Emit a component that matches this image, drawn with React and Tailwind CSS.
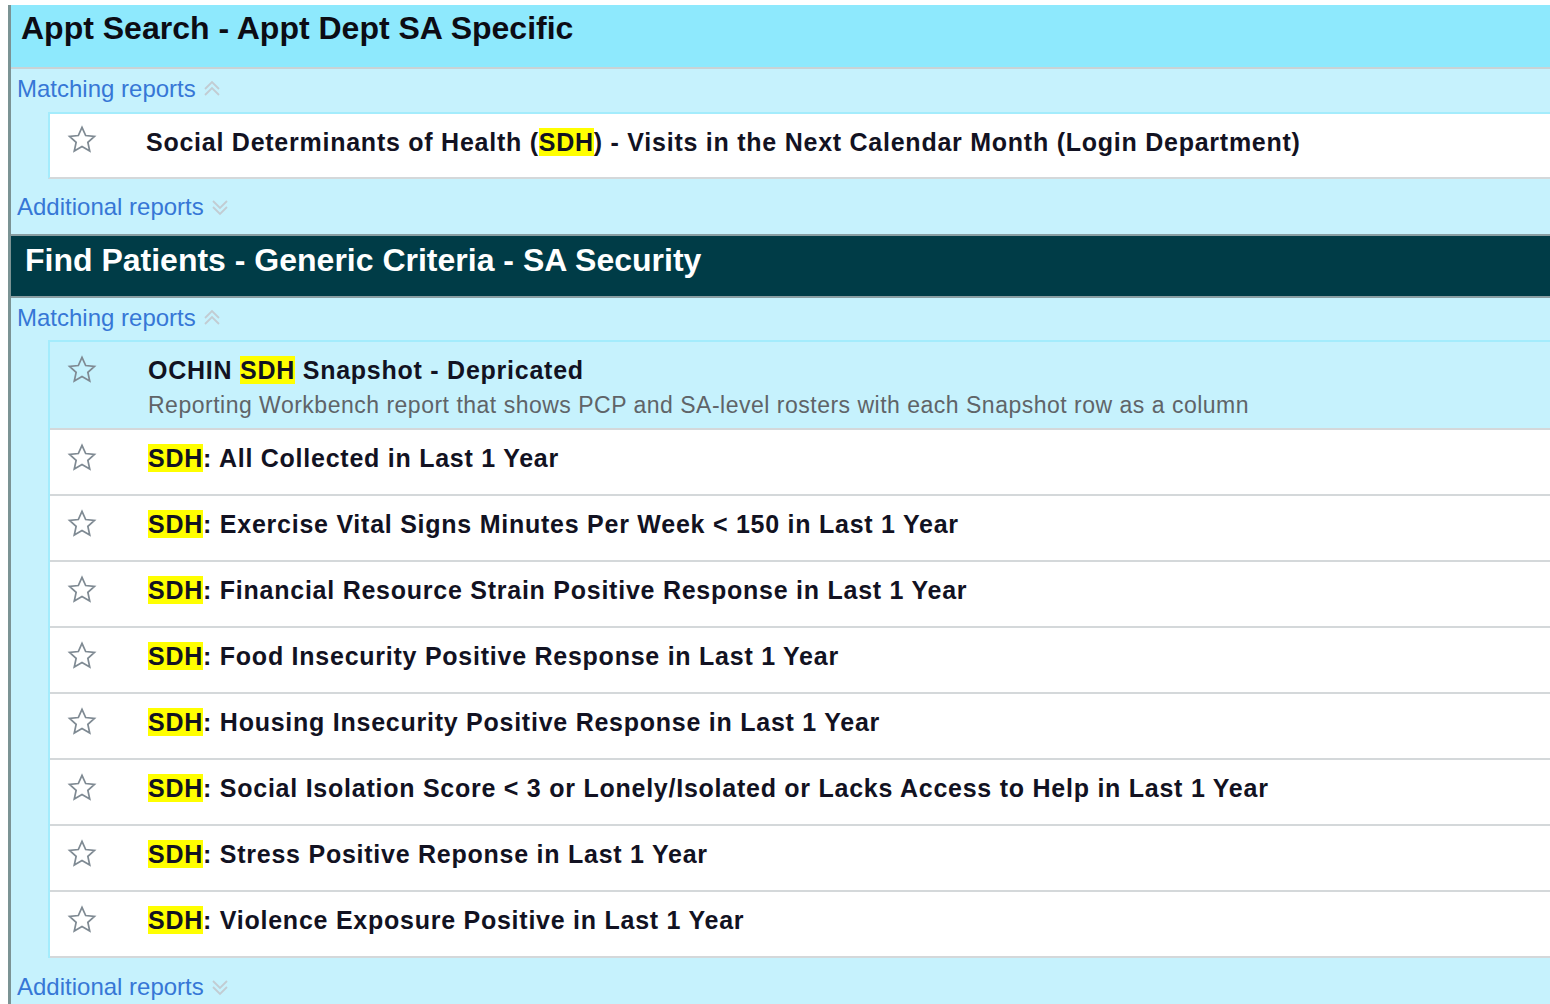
import { Fragment } from 'react';

const font = { fontFamily: '"Liberation Sans", Arial, sans-serif' };

function Star() {
    return (
        <svg width="32" height="32" viewBox="0 0 24 24" className="shrink-0">
            <path
                d="M12 2.6l2.75 6.05 6.6.7-4.95 4.45 1.4 6.5L12 16.95l-5.8 3.35 1.4-6.5L2.65 9.35l6.6-.7z"
                fill="none"
                stroke="#7f8a93"
                strokeWidth="1.3"
                strokeLinejoin="miter"
            />
        </svg>
    );
}

function Chevrons({ up }) {
    return (
        <svg width="20" height="22" viewBox="0 0 20 22" className="ml-[6px]">
            {up ? (
                <g fill="none" stroke="#c2ccd2" strokeWidth="1.8">
                    <path d="M3 11l7-7 7 7" />
                    <path d="M3 17l7-7 7 7" />
                </g>
            ) : (
                <g fill="none" stroke="#c2ccd2" strokeWidth="1.8">
                    <path d="M3 5l7 7 7-7" />
                    <path d="M3 11l7 7 7-7" />
                </g>
            )}
        </svg>
    );
}

function Hl({ children }) {
    return <span className="bg-[#ffff00]">{children}</span>;
}

function SectionLink({ label, up, className }) {
    return (
        <div className={`flex items-center pl-[6px] text-[24px] text-[#3677d6] ${className}`}>
            <span>{label}</span>
            <Chevrons up={up} />
        </div>
    );
}

function ReportRow({ children, sub, active, first }) {
    return (
        <div
            className={`flex items-start border-b-2 border-[#d4d8da] ${active ? 'bg-[#c6f2fd]' : 'bg-white'} ${first ? 'h-[88px]' : 'h-[66px]'}`}
        >
            <div className="w-[98px] pl-[16px] pt-[12px]">
                <Star />
            </div>
            <div className="pt-[13px]">
                <div className="text-[25px] tracking-[0.75px] font-bold text-[#121222] leading-[30px]">{children}</div>
                {sub && (
                    <div className="text-[23px] tracking-[0.5px] text-[#5f6468] leading-[30px] mt-[5px]">{sub}</div>
                )}
            </div>
        </div>
    );
}

const sdhReports = [
    'All Collected in Last 1 Year',
    'Exercise Vital Signs Minutes Per Week < 150 in Last 1 Year',
    'Financial Resource Strain Positive Response in Last 1 Year',
    'Food Insecurity Positive Response in Last 1 Year',
    'Housing Insecurity Positive Response in Last 1 Year',
    'Social Isolation Score < 3 or Lonely/Isolated or Lacks Access to Help in Last 1 Year',
    'Stress Positive Reponse in Last 1 Year',
    'Violence Exposure Positive in Last 1 Year',
];

export default function App() {
    return (
        <div style={font} className="w-[1550px] h-[1004px] overflow-hidden bg-white pl-2 pt-[5px]">
            <div className="h-full border-l-[3px] border-[#7b9394] bg-[#c6f2fd]">
                {/* first group */}
                <div className="h-[64px] bg-[#8ee9fd] border-b-2 border-[#c9d3d6] pl-[10px] pt-[3px] leading-[40px] text-[32px] font-bold text-[#0c0c14]">
                    Appt Search - Appt Dept SA Specific
                </div>
                <SectionLink label="Matching reports" up className="h-[43px] pb-[4px]" />
                <div className="ml-[37px] h-[67px] bg-white border-t-2 border-l-2 border-[#a4ecfc] border-b-2 border-b-[#d4d8da] flex items-start">
                    <div className="w-[96px] pl-[16px] pt-[10px]">
                        <Star />
                    </div>
                    <div className="pt-[13px] text-[25px] tracking-[0.75px] font-bold text-[#121222] leading-[30px]">
                        Social Determinants of Health (<Hl>SDH</Hl>) - Visits in the Next Calendar Month (Login Department)
                    </div>
                </div>
                <SectionLink label="Additional reports" className="h-[55px]" />

                {/* second group */}
                <div className="h-[64px] bg-[#003c47] border-y-2 border-[#8a9ea2] pl-[14px] pt-[4px] leading-[40px] text-[32px] font-bold text-white">
                    Find Patients - Generic Criteria - SA Security
                </div>
                <SectionLink label="Matching reports" up className="h-[42px] pb-[2px]" />
                <div className="ml-[37px] border-t-2 border-l-2 border-[#a4ecfc]">
                    <ReportRow first active sub="Reporting Workbench report that shows PCP and SA-level rosters with each Snapshot row as a column">
                        OCHIN <Hl>SDH</Hl> Snapshot - Depricated
                    </ReportRow>
                    {sdhReports.map((r) => (
                        <Fragment key={r}>
                            <ReportRow>
                                <Hl>SDH</Hl>: {r}
                            </ReportRow>
                        </Fragment>
                    ))}
                </div>
                <SectionLink label="Additional reports" className="h-[46px] pt-[12px]" />
            </div>
        </div>
    );
}
